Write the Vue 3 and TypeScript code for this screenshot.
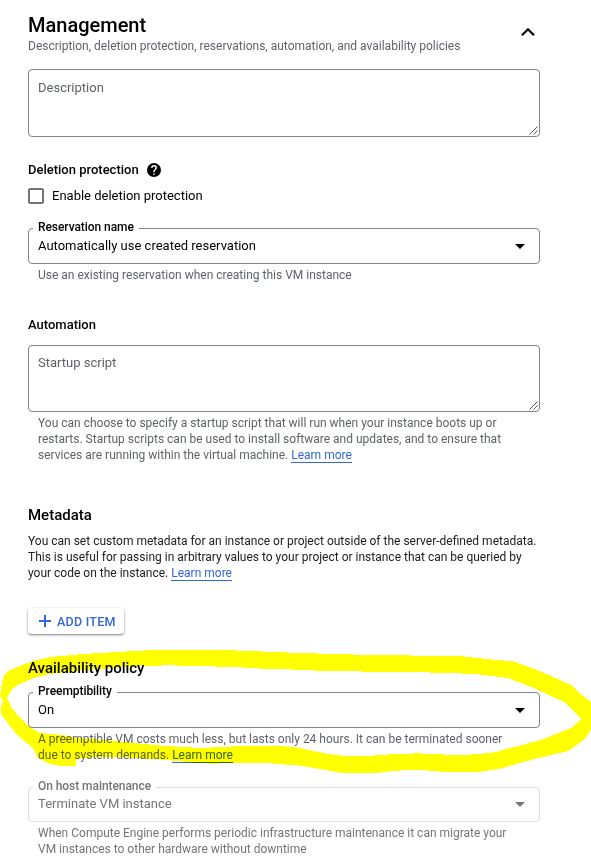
<script setup lang="ts">
import { ref } from 'vue'

const description = ref('')
const startupScript = ref('')
const deletionProtection = ref(false)
</script>

<template>
  <main class="page">
    <header class="head">
      <div>
        <h1>Management</h1>
        <p class="subtitle">Description, deletion protection, reservations, automation, and availability policies</p>
      </div>
      <svg class="chevron" viewBox="0 0 16 12"><path d="M2 9.2 8 3.2 14 9.2" /></svg>
    </header>

    <div class="area area-description">
      <textarea v-model="description" placeholder="Description"></textarea>
      <svg class="grip" viewBox="0 0 9 9"><path d="M.5 8.5 8.5 .5M4.5 8.5 8.5 4.5" /></svg>
    </div>

    <h3 class="deletion-title">
      Deletion protection
      <svg class="help" viewBox="0 0 24 24"><path d="M12 0a12 12 0 1 0 0 24 12 12 0 0 0 0-24zm1.3 20.3h-2.6v-2.5h2.6zm2.6-9.3-1.1 1.1c-.9.9-1.5 1.7-1.5 3.6h-2.6v-.7c0-1.3.6-2.5 1.4-3.4l1.5-1.5c.5-.4.7-1 .7-1.7a2.4 2.4 0 0 0-4.8 0H7.1a4.9 4.9 0 0 1 9.8 0c0 1-.4 1.9-1 2.6z" /></svg>
    </h3>
    <label class="check">
      <input v-model="deletionProtection" type="checkbox" />
      <span class="box"></span>
      <span class="check-text">Enable deletion protection</span>
    </label>

    <fieldset class="select reservation">
      <legend>Reservation name</legend>
      <span class="value">Automatically use created reservation</span>
      <svg class="arrow" viewBox="0 0 10 5"><path d="M0 0h10L5 5z" /></svg>
    </fieldset>
    <p class="hint">Use an existing reservation when creating this VM instance</p>

    <h3 class="automation-title">Automation</h3>
    <div class="area area-script">
      <textarea v-model="startupScript" placeholder="Startup script"></textarea>
      <svg class="grip" viewBox="0 0 9 9"><path d="M.5 8.5 8.5 .5M4.5 8.5 8.5 4.5" /></svg>
    </div>
    <p class="hint">
      You can choose to specify a startup script that will run when your instance boots up or<br />
      restarts. Startup scripts can be used to install software and updates, and to ensure that<br />
      services are running within the virtual machine. <a>Learn more</a>
    </p>

    <h2 class="metadata-title">Metadata</h2>
    <p class="body">
      You can set custom metadata for an instance or project outside of the server-defined metadata.<br />
      This is useful for passing in arbitrary values to your project or instance that can be queried by<br />
      your code on the instance. <a>Learn more</a>
    </p>
    <button class="add" type="button">
      <svg class="plus" viewBox="0 0 12 12"><path d="M6 0v12M0 6h12" /></svg>
      <span>ADD ITEM</span>
    </button>

    <h2 class="policy-title">Availability policy</h2>
    <fieldset class="select preempt">
      <legend>Preemptibility</legend>
      <span class="value">On</span>
      <svg class="arrow" viewBox="0 0 10 5"><path d="M0 0h10L5 5z" /></svg>
    </fieldset>
    <p class="hint">
      A preemptible VM costs much less, but lasts only 24 hours. It can be terminated sooner<br />
      due to system demands. <a>Learn more</a>
    </p>

    <fieldset class="select host disabled">
      <legend>On host maintenance</legend>
      <span class="value">Terminate VM instance</span>
      <svg class="arrow" viewBox="0 0 10 5"><path d="M0 0h10L5 5z" /></svg>
    </fieldset>
    <p class="hint host-hint">
      When Compute Engine performs periodic infrastructure maintenance it can migrate your<br />
      VM instances to other hardware without downtime
    </p>

    <svg class="marker" viewBox="0 640 591 140" shape-rendering="crispEdges">
      <path
        fill-rule="evenodd"
        d="M2 683L4 675L10 670L20 666L33 661L50 657L83 654L117 652L163 649.500L200 650L237 650.500L300 653L353 654.500L400 655.300L464 656.500L487 659L514 661.500L541 671.500L571 685L582 695L592 703V728L584 740L568 751L534 759L501 768.500L481 771.700H441L418 769.700L391 771L377 773H342L320 769L300 765.700L267 763L243 762.500L213 763.700L193 762.700L167 760L133 757.700L100 756.500L76 759V766H60L50 764L38 758L33 748L17 735L7 722L1 714V706L3 702L0 696Z
        M13 688L7 698L12 708L20 718L30 727L40 733L63 735L76 738L104 740L133 743L167 746L200 748L243 746H280L297 747.500L323 753L343 756H367L391 754.300L418 753.300L461 755.300L491 753L541 740L571 728L582 719L564 702L534 688L508 678L475 674L441 672.700L400 672L323 671L300 669.700L267 669L240 667.300L200 666L167 665.300L127 667L83 670L50 674L33 678L20 684Z"
      />
    </svg>
  </main>
</template>

<style>
body {
  background: #fff;
  overflow: hidden;
}
</style>

<style scoped>
.page {
  position: relative;
  box-sizing: border-box;
  width: 591px;
  height: 860px;
  padding: 13px 51px 0 28px;
  overflow: hidden;
  background: #fff;
  color: #000;
  font-family: Roboto, 'Liberation Sans', sans-serif;
  font-size: 13px;
  white-space: nowrap;
}
h1, h2, h3, p { margin: 0; }
h1 { font-size: 20px; line-height: 24px; font-weight: 500; }
h2 { font-size: 15px; line-height: 20px; font-weight: 500; }
h3 { font-size: 13px; line-height: 20px; font-weight: 500; }
.head { display: flex; justify-content: space-between; align-items: center; height: 42px; }
.subtitle { font-size: 12px; line-height: 18px; color: #5f6368; }
.chevron { width: 16px; height: 12px; margin: 0 4px 5px 0; fill: none; stroke: #000; stroke-width: 2.2; }
.area { position: relative; width: 512px; margin-top: 14px; }
.area textarea {
  display: block;
  box-sizing: border-box;
  width: 512px;
  height: 68px;
  margin: 0;
  padding: 8px 9px;
  border: 1px solid #80868b;
  border-radius: 4px;
  background: #fff;
  font: 13px/20px Roboto, sans-serif;
  resize: none;
  outline: none;
}
.area textarea::placeholder { color: #5f6368; opacity: 1; }
.area-script { margin-top: 10px; }
.area-script textarea { height: 67px; padding-top: 7px; }
.grip { position: absolute; right: 2px; bottom: 2px; width: 9px; height: 9px; stroke: #555; stroke-width: 1; fill: none; }
.deletion-title { display: flex; align-items: center; gap: 8px; margin-top: 23px; }
.help { width: 14px; height: 14px; margin-bottom: 1px; }
.check { display: flex; align-items: center; gap: 8px; height: 20px; margin-top: 6px; }
.check input { display: none; }
.check-text { padding-bottom: 2px; }
.box { box-sizing: border-box; width: 16px; height: 16px; border: 2px solid #757575; border-radius: 2px; }
.select {
  display: flex;
  align-items: flex-start;
  justify-content: space-between;
  box-sizing: border-box;
  width: 512px;
  height: 44px;
  margin: 0;
  padding: 0 14px 0 9px;
  border: 1px solid #80868b;
  border-radius: 4px;
  min-width: 0;
}
.select legend {
  height: 16px;
  margin-left: -5px;
  padding: 0 5px;
  font-size: 12px;
  line-height: 14px;
  font-weight: 500;
  letter-spacing: -0.06px;
}
.value { line-height: 20px; }
.arrow { width: 10px; height: 5px; margin-top: 8px; }
.reservation { margin-top: 14px; }
.hint { margin: 3px 0 0 10px; font-size: 12px; line-height: 16px; color: #5f6368; }
a { color: #3367d6; border-bottom: 1px solid #3367d6; }
.automation-title { margin-top: 32px; }
.metadata-title { margin-top: 42px; }
.body { margin-top: 8px; font-size: 12px; line-height: 16px; color: #202124; }
.add {
  display: flex;
  align-items: center;
  gap: 6px;
  width: 96px;
  height: 26px;
  margin: 27px 0 0;
  padding: 0 0 0 11px;
  border: 0;
  border-radius: 3px;
  background: #fff;
  box-shadow: 0 1px 3px rgba(0, 0, 0, .35), 0 1px 1px rgba(0, 0, 0, .2);
  color: #3367d6;
  font: 500 12.5px/16px Roboto, sans-serif;
  letter-spacing: .25px;
}
.add span { padding-top: 1px; }
.plus { width: 12px; height: 12px; stroke: #3367d6; stroke-width: 2; }
.policy-title { margin-top: 24px; }
.preempt { margin-top: 6px; }
.host { height: 43px; margin-top: 16px; }
.disabled { border-color: #e0e0e0; color: #757575; }
.disabled .value { line-height: 18px; }
.disabled .arrow { margin-top: 7px; fill: #757575; }
.host-hint { color: #757575; }
.marker { position: absolute; left: 0; top: 640px; width: 591px; height: 140px; fill: #ff0; mix-blend-mode: multiply; pointer-events: none; }
</style>
